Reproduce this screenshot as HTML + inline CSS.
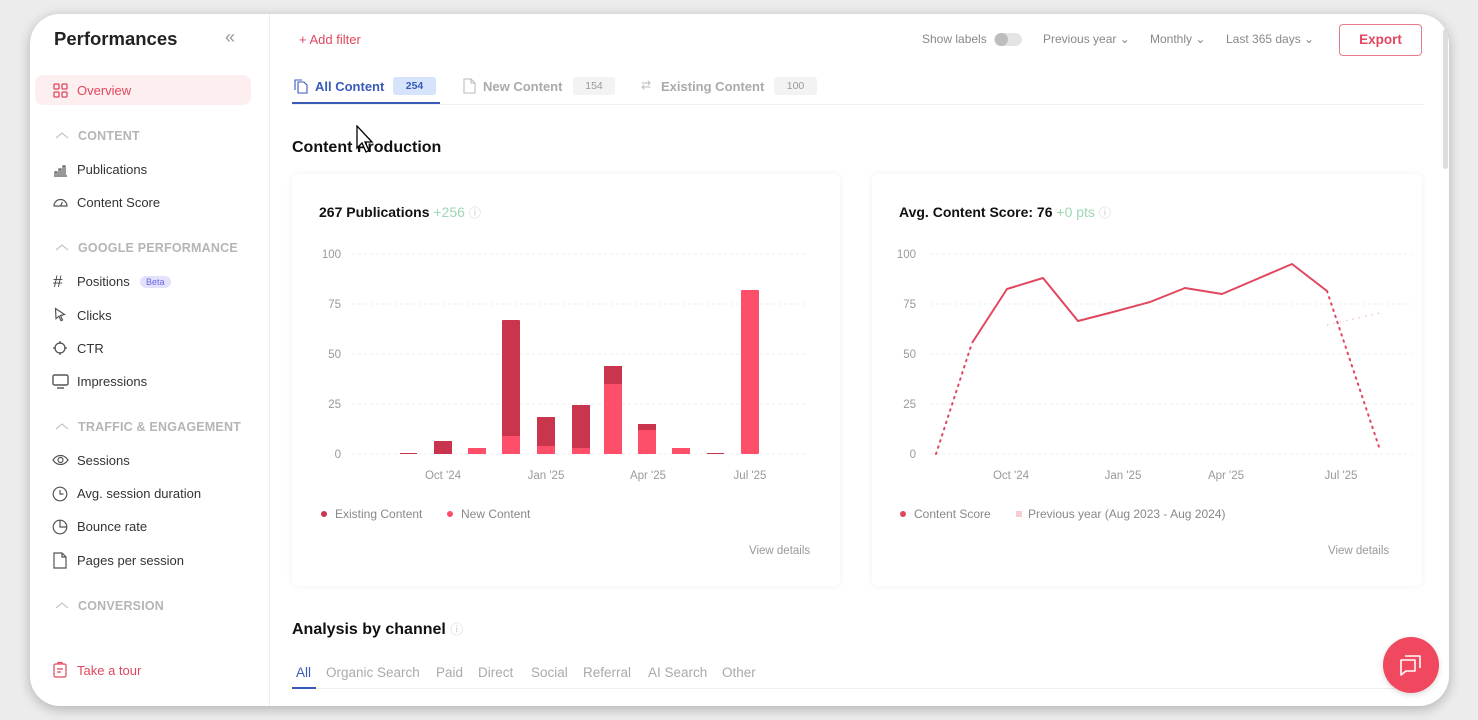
<!DOCTYPE html>
<html><head><meta charset="utf-8"><style>
*{margin:0;padding:0;box-sizing:border-box}
body{width:1478px;height:720px;background:#ececec;font-family:"Liberation Sans",sans-serif;position:relative;overflow:hidden;color:#222}
.win{position:absolute;left:30px;top:14px;width:1419px;height:692px;background:#fff;border-radius:30px;box-shadow:0 3px 12px rgba(0,0,0,.25);overflow:hidden}
.a{position:absolute;white-space:nowrap}
.side{position:absolute;left:0;top:0;width:240px;height:692px;border-right:1px solid #eee}
.nav{font-size:13px;color:#333}
.sec{font-size:12.5px;color:#b5b5b5;font-weight:bold;letter-spacing:.2px}
.ic{position:absolute}
.card{position:absolute;background:#fff;border-radius:6px;box-shadow:0 0 8px rgba(0,0,0,.06)}
.g{stroke:#eee;stroke-dasharray:3 3}
.ch{position:absolute;top:651px;font-size:13.5px;color:#aaa;white-space:nowrap}
</style></head><body>
<div class="win">
<div class="side">
<div class="a" style="left:24px;top:14px;font-size:18.5px;font-weight:bold;color:#222">Performances</div>
<div class="a" style="left:195px;top:13px;font-size:18px;color:#999">«</div>
<div class="a" style="left:5px;top:61px;width:216px;height:30px;background:#fdeef0;border-radius:8px"></div>
<svg class="ic" style="left:23px;top:69px" width="15" height="15" viewBox="0 0 15 15" fill="none" stroke="#e0475e" stroke-width="1.3"><rect x="1" y="1" width="5" height="5" rx="1"/><rect x="9" y="1" width="5" height="5" rx="1"/><rect x="1" y="9" width="5" height="5" rx="1"/><rect x="9" y="9" width="5" height="5" rx="1"/></svg>
<div class="a nav" style="left:47px;top:69px;color:#e0475e">Overview</div>
<svg class="ic" style="left:25px;top:117px" width="14" height="8" viewBox="0 0 14 8" fill="none" stroke="#c5c5c5" stroke-width="1.2"><path d="M1 7l6-5 6 5"/></svg>
<div class="a sec" style="left:48px;top:115px">CONTENT</div>
<svg class="ic" style="left:23px;top:149px" width="15" height="14" viewBox="0 0 15 14" fill="none" stroke="#555" stroke-width="1.2"><path d="M1 13h13M2 12V9h2v3M6 12V6h2v6M10 12V3h2v9"/></svg>
<div class="a nav" style="left:47px;top:148px">Publications</div>
<svg class="ic" style="left:22px;top:182px" width="17" height="13" viewBox="0 0 17 13" fill="none" stroke="#555" stroke-width="1.2"><path d="M2 10a6.5 6.5 0 0 1 13 0zM8.5 10l2-4"/></svg>
<div class="a nav" style="left:47px;top:181px">Content Score</div>
<svg class="ic" style="left:25px;top:229px" width="14" height="8" viewBox="0 0 14 8" fill="none" stroke="#c5c5c5" stroke-width="1.2"><path d="M1 7l6-5 6 5"/></svg>
<div class="a sec" style="left:48px;top:227px">GOOGLE PERFORMANCE</div>
<div class="a" style="left:23px;top:258px;font-size:17px;color:#444">#</div>
<div class="a nav" style="left:47px;top:260px">Positions</div>
<div class="a" style="left:110px;top:262px;background:#e3e1fb;color:#6a64e0;font-size:9px;padding:1px 6px;border-radius:8px">Beta</div>
<svg class="ic" style="left:24px;top:293px" width="12" height="15" viewBox="0 0 12 15" fill="none" stroke="#555" stroke-width="1.2"><path d="M1.5 1.5l9 6-4 1 2 4.5-1.5.7-2-4.5-3 2.5z"/></svg>
<div class="a nav" style="left:47px;top:294px">Clicks</div>
<svg class="ic" style="left:22px;top:326px" width="16" height="16" viewBox="0 0 16 16" fill="none" stroke="#555" stroke-width="1.3"><circle cx="8" cy="8" r="5"/><path d="M8 1v3M8 12v3M1 8h3M12 8h3"/></svg>
<div class="a nav" style="left:47px;top:327px">CTR</div>
<svg class="ic" style="left:22px;top:360px" width="17" height="15" viewBox="0 0 17 15" fill="none" stroke="#555" stroke-width="1.4"><rect x="1" y="1" width="15" height="10" rx="1.5"/><path d="M5 14h7"/></svg>
<div class="a nav" style="left:47px;top:360px">Impressions</div>
<svg class="ic" style="left:25px;top:408px" width="14" height="8" viewBox="0 0 14 8" fill="none" stroke="#c5c5c5" stroke-width="1.2"><path d="M1 7l6-5 6 5"/></svg>
<div class="a sec" style="left:48px;top:406px">TRAFFIC &amp; ENGAGEMENT</div>
<svg class="ic" style="left:22px;top:440px" width="17" height="12" viewBox="0 0 17 12" fill="none" stroke="#555" stroke-width="1.2"><path d="M1 6c4-6 11-6 15 0c-4 6-11 6-15 0z"/><circle cx="8.5" cy="6" r="2.5"/></svg>
<div class="a nav" style="left:47px;top:439px">Sessions</div>
<svg class="ic" style="left:22px;top:472px" width="16" height="16" viewBox="0 0 16 16" fill="none" stroke="#555" stroke-width="1.2"><circle cx="8" cy="8" r="6.8"/><path d="M8 4v4h3.5"/></svg>
<div class="a nav" style="left:47px;top:472px">Avg. session duration</div>
<svg class="ic" style="left:22px;top:505px" width="16" height="16" viewBox="0 0 16 16" fill="none" stroke="#555" stroke-width="1.2"><circle cx="8" cy="8" r="6.8"/><path d="M8 1.2V8h6.8"/></svg>
<div class="a nav" style="left:47px;top:505px">Bounce rate</div>
<svg class="ic" style="left:23px;top:538px" width="14" height="17" viewBox="0 0 14 17" fill="none" stroke="#555" stroke-width="1.2"><path d="M1 1h8l4 4v11H1z M9 1v4h4"/></svg>
<div class="a nav" style="left:47px;top:539px">Pages per session</div>
<svg class="ic" style="left:25px;top:587px" width="14" height="8" viewBox="0 0 14 8" fill="none" stroke="#c5c5c5" stroke-width="1.2"><path d="M1 7l6-5 6 5"/></svg>
<div class="a sec" style="left:48px;top:585px">CONVERSION</div>
<svg class="ic" style="left:23px;top:647px" width="14" height="17" viewBox="0 0 14 17" fill="none" stroke="#e0475e" stroke-width="1.2"><rect x="1" y="3" width="12" height="13" rx="1.5"/><path d="M5 3V1.5h4V3M4 8h6M4 11h4"/></svg>
<div class="a nav" style="left:47px;top:649px;color:#e0475e">Take a tour</div>
</div>

<div class="a" style="left:269px;top:18px;font-size:13px;color:#e0475e">+ Add filter</div>
<div class="a" style="left:892px;top:18px;font-size:12px;color:#888">Show labels</div>
<div class="a" style="left:964px;top:19px;width:28px;height:13px;border-radius:7px;background:#e4e4e4"></div>
<div class="a" style="left:965px;top:19px;width:13px;height:13px;border-radius:50%;background:#bdbdbd"></div>
<div class="a" style="left:1013px;top:18px;font-size:12px;color:#888">Previous year ⌄</div>
<div class="a" style="left:1120px;top:18px;font-size:12px;color:#888">Monthly ⌄</div>
<div class="a" style="left:1196px;top:18px;font-size:12px;color:#888">Last 365 days ⌄</div>
<div class="a" style="left:1309px;top:10px;width:83px;height:32px;border:1px solid #e57b8b;border-radius:4px;color:#e0475e;font-size:13.5px;font-weight:bold;text-align:center;line-height:30px">Export</div>

<svg class="ic" style="left:264px;top:65px" width="14" height="15" viewBox="0 0 14 15" fill="none" stroke="#3a5ab8" stroke-width="1.1"><path d="M4 3h6l3 3v8H4zM1 11V1h7"/></svg>
<div class="a" style="left:285px;top:65px;font-size:13px;font-weight:bold;color:#3a5ab8">All Content</div>
<div class="a" style="left:363px;top:63px;width:43px;height:18px;background:#d6e4fb;border-radius:3px;font-size:10.5px;font-weight:bold;color:#3a5ab8;text-align:center;line-height:18px">254</div>
<div class="a" style="left:262px;top:88px;width:148px;height:2px;background:#3a5ab8"></div>
<svg class="ic" style="left:433px;top:64px" width="13" height="16" viewBox="0 0 13 16" fill="none" stroke="#bbb" stroke-width="1.1"><path d="M1 1h7l4 4v10H1zM8 1v4h4"/></svg>
<div class="a" style="left:453px;top:65px;font-size:13px;font-weight:bold;color:#aaa">New Content</div>
<div class="a" style="left:543px;top:63px;width:42px;height:18px;background:#f3f3f3;border-radius:3px;font-size:10.5px;color:#999;text-align:center;line-height:18px">154</div>
<div class="a" style="left:611px;top:64px;font-size:12px;color:#bbb">⇄</div>
<div class="a" style="left:631px;top:65px;font-size:13px;font-weight:bold;color:#aaa">Existing Content</div>
<div class="a" style="left:744px;top:63px;width:43px;height:18px;background:#f3f3f3;border-radius:3px;font-size:10.5px;color:#999;text-align:center;line-height:18px">100</div>
<div class="a" style="left:262px;top:90px;width:1132px;height:1px;background:#eee"></div>

<div class="a" style="left:262px;top:125px;font-size:16px;font-weight:bold;color:#111">Content Production</div>
<svg class="ic" style="left:326px;top:111px" width="22" height="30" viewBox="0 0 22 30"><path d="M1 1v22l5-5 4 9 3-1.5-4-8.5h7z" fill="#fff" stroke="#000" stroke-width="1.3"/></svg>

<div class="card" style="left:262px;top:160px;width:548px;height:412px"></div>
<div class="a" style="left:289px;top:190px;font-size:14px;font-weight:bold;color:#111">267 Publications <span style="color:#9fd6b4;font-weight:normal">+256</span> <span style="color:#ccc;font-weight:normal;font-size:12px">ⓘ</span></div>
<svg class="ic" style="left:262px;top:216px" width="548" height="300">
<g fill="#999" font-size="11.5" font-family="Liberation Sans" text-anchor="end">
<text x="49" y="28">100</text><text x="49" y="78">75</text><text x="49" y="128">50</text><text x="49" y="178">25</text><text x="49" y="228">0</text>
</g>
<g class="g"><line x1="60" y1="24" x2="513" y2="24"/><line x1="60" y1="74" x2="513" y2="74"/><line x1="60" y1="124" x2="513" y2="124"/><line x1="60" y1="174" x2="513" y2="174"/><line x1="60" y1="224" x2="513" y2="224"/></g>
<g fill="#c8354d">
<rect x="108" y="223" width="17" height="1"/>
<rect x="142" y="211" width="18" height="13"/>
<rect x="210" y="90" width="18" height="134" rx="1"/>
<rect x="245" y="187" width="18" height="37"/>
<rect x="280" y="175" width="18" height="49"/>
<rect x="312" y="136" width="18" height="88"/>
<rect x="346" y="194" width="18" height="30"/>
<rect x="415" y="223" width="17" height="1"/>
</g>
<g fill="#fd4f69">
<rect x="176" y="218" width="18" height="6"/>
<rect x="210" y="206" width="18" height="18"/>
<rect x="245" y="216" width="18" height="8"/>
<rect x="280" y="218" width="18" height="6"/>
<rect x="312" y="154" width="18" height="70"/>
<rect x="346" y="200" width="18" height="24"/>
<rect x="380" y="218" width="18" height="6"/>
<rect x="449" y="60" width="18" height="164" rx="1"/>
</g>
<g fill="#999" font-size="11.5" font-family="Liberation Sans" text-anchor="middle">
<text x="151" y="249">Oct '24</text><text x="254" y="249">Jan '25</text><text x="356" y="249">Apr '25</text><text x="458" y="249">Jul '25</text>
</g>
<circle cx="32" cy="284" r="3" fill="#c8354d"/><text x="43" y="288" fill="#888" font-size="12" font-family="Liberation Sans">Existing Content</text>
<circle cx="158" cy="284" r="3" fill="#fd4f69"/><text x="169" y="288" fill="#888" font-size="12" font-family="Liberation Sans">New Content</text>
</svg>
<div class="a" style="left:719px;top:531px;font-size:11.5px;color:#999">View details</div>

<div class="card" style="left:842px;top:160px;width:550px;height:412px"></div>
<div class="a" style="left:869px;top:190px;font-size:14px;font-weight:bold;color:#111">Avg. Content Score: 76 <span style="color:#9fd6b4;font-weight:normal">+0 pts</span> <span style="color:#ccc;font-weight:normal;font-size:12px">ⓘ</span></div>
<svg class="ic" style="left:842px;top:216px" width="550" height="300">
<g fill="#999" font-size="11.5" font-family="Liberation Sans" text-anchor="end">
<text x="44" y="28">100</text><text x="44" y="78">75</text><text x="44" y="128">50</text><text x="44" y="178">25</text><text x="44" y="228">0</text>
</g>
<g class="g"><line x1="58" y1="24" x2="540" y2="24"/><line x1="58" y1="74" x2="540" y2="74"/><line x1="58" y1="124" x2="540" y2="124"/><line x1="58" y1="174" x2="540" y2="174"/><line x1="58" y1="224" x2="540" y2="224"/></g>
<path d="M64 224L100 113" stroke="#e0475e" stroke-width="2" stroke-dasharray="1.5 5" stroke-linecap="round" fill="none"/>
<path d="M100 113L135 59L171 48L206 91L241 82L278 72L313 58L350 64L385 49L420 34L455 61" stroke="#e0475e" stroke-width="2" fill="none" stroke-linejoin="round"/>
<path d="M455 61L508 220" stroke="#e0475e" stroke-width="2" stroke-dasharray="1.5 5" stroke-linecap="round" fill="none"/>
<path d="M455 95L508 83" stroke="#f3c5cd" stroke-width="1.5" stroke-dasharray="1.5 5" fill="none"/>
<g fill="#999" font-size="11.5" font-family="Liberation Sans" text-anchor="middle">
<text x="139" y="249">Oct '24</text><text x="251" y="249">Jan '25</text><text x="354" y="249">Apr '25</text><text x="469" y="249">Jul '25</text>
</g>
<circle cx="31" cy="284" r="3" fill="#e0475e"/><text x="42" y="288" fill="#888" font-size="12" font-family="Liberation Sans">Content Score</text>
<rect x="144" y="281" width="6" height="6" fill="#f7cdd4"/><text x="156" y="288" fill="#888" font-size="12" font-family="Liberation Sans">Previous year (Aug 2023 - Aug 2024)</text>
</svg>
<div class="a" style="left:1298px;top:531px;font-size:11.5px;color:#999">View details</div>

<div class="a" style="left:262px;top:605px;font-size:16px;font-weight:bold;color:#111">Analysis by channel <span style="color:#ccc;font-weight:normal;font-size:13px">ⓘ</span></div>
<div class="ch" style="left:266px;color:#3a5ab8">All</div>
<div class="ch" style="left:296px">Organic Search</div>
<div class="ch" style="left:406px">Paid</div>
<div class="ch" style="left:448px">Direct</div>
<div class="ch" style="left:501px">Social</div>
<div class="ch" style="left:553px">Referral</div>
<div class="ch" style="left:618px">AI Search</div>
<div class="ch" style="left:692px">Other</div>
<div class="a" style="left:262px;top:674px;width:1132px;height:1px;background:#eee"></div>
<div class="a" style="left:262px;top:673px;width:24px;height:2px;background:#3a5ab8"></div>

<div class="a" style="left:1413px;top:15px;width:5px;height:140px;background:#ddd;border-radius:3px"></div>
<div class="a" style="left:1353px;top:623px;width:56px;height:56px;border-radius:50%;background:#f0485f;box-shadow:0 2px 6px rgba(0,0,0,.15)"></div>
<svg class="ic" style="left:1368px;top:638px" width="26" height="26" viewBox="0 0 26 26" fill="none" stroke="#fff" stroke-width="1.6" stroke-linejoin="round"><path d="M3 8h14v11H8l-5 4z"/><path d="M7 4h15v12"/></svg>
</div>
</body></html>
